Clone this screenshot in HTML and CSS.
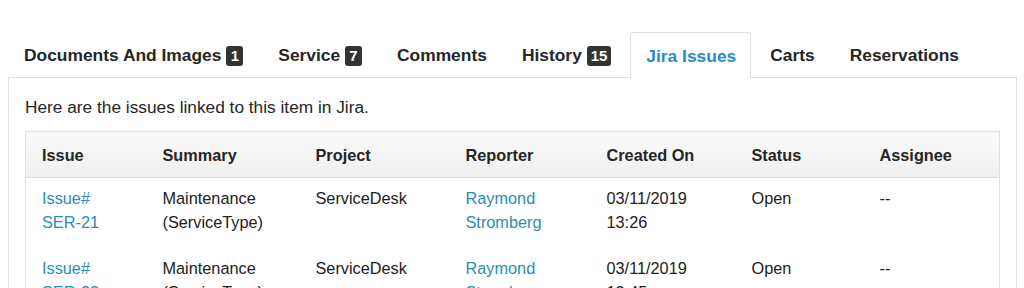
FILE: index.html
```html
<!DOCTYPE html>
<html>
<head>
<meta charset="utf-8">
<link rel="stylesheet" href="styles.css">
</head>
<body>
<ul class="tabs">
  <li class="tab">Documents And Images <span class="badge">1</span></li>
  <li class="tab">Service <span class="badge">7</span></li>
  <li class="tab">Comments</li>
  <li class="tab">History <span class="badge">15</span></li>
  <li class="tab active">Jira Issues</li>
  <li class="tab">Carts</li>
  <li class="tab">Reservations</li>
</ul>
<div class="panel">
  <p class="intro">Here are the issues linked to this item in Jira.</p>
  <table class="issues">
    <colgroup>
      <col class="c1"><col class="c2"><col class="c3"><col class="c4"><col class="c5"><col class="c6"><col class="c7">
    </colgroup>
    <thead>
      <tr><th>Issue</th><th>Summary</th><th>Project</th><th>Reporter</th><th>Created On</th><th>Status</th><th>Assignee</th></tr>
    </thead>
    <tbody>
      <tr>
        <td><a href="#">Issue#<br>SER-21</a></td>
        <td>Maintenance<br>(ServiceType)</td>
        <td>ServiceDesk</td>
        <td><a href="#">Raymond<br>Stromberg</a></td>
        <td>03/11/2019<br>13:26</td>
        <td>Open</td>
        <td>--</td>
      </tr>
      <tr>
        <td><a href="#">Issue#<br>SER-22</a></td>
        <td>Maintenance<br>(ServiceType)</td>
        <td>ServiceDesk</td>
        <td><a href="#">Raymond<br>Stromberg</a></td>
        <td>03/11/2019<br>13:45</td>
        <td>Open</td>
        <td>--</td>
      </tr>
    </tbody>
  </table>
</div>
</body>
</html>
```
FILE: styles.css
```css
* { box-sizing: border-box; }
html, body { background: #fff; }
body {
  margin: 31px 7px 0 8px;
  font-family: "Liberation Sans", Arial, sans-serif;
  color: #222;
  font-size: 16px;
}
.tabs {
  list-style: none;
  margin: 0;
  padding: 0;
  display: flex;
  align-items: flex-end;
  position: relative;
  z-index: 1;
}
.tab {
  font-weight: bold;
  font-size: 17.4px;
  color: #262626;
  height: 46px;
  padding: 2px 15px 0;
  margin-right: 3px;
  display: flex;
  align-items: center;
  border: 1px solid transparent;
  border-bottom: none;
  border-radius: 4px 4px 0 0;
  white-space: pre;
}
.tab.active {
  color: #2a8bc4;
  background: #fff;
  border-color: #dedede;
  margin-bottom: -1px;
  padding: 2px 14px 0 15px;
}
.badge {
  display: inline-block;
  background: #333;
  color: #fff;
  font-size: 15px;
  line-height: 20px;
  min-width: 17px;
  padding: 0 4px;
  text-align: center;
  border-radius: 3px;
}
.panel {
  border: 1px solid #e0e0e0;
  padding: 17px 16px 0 16px;
}
.intro {
  margin: 0 0 12px 0;
  line-height: 24px;
  font-size: 17.3px;
  color: #262626;
}
.issues {
  width: 100%;
  border-collapse: collapse;
  table-layout: fixed;
  border: 1px solid #e0e0e0;
  font-size: 16.3px;
}
.c1 { width: 121px; }
.c2 { width: 153px; }
.c3 { width: 150px; }
.c4 { width: 141px; }
.c5 { width: 145px; }
.c6 { width: 128px; }
.issues th {
  text-align: left;
  font-weight: bold;
  color: #262626;
  padding: 11px 16px 10px;
  line-height: 24px;
  background: linear-gradient(#fafafa, #efefef);
  border-bottom: 1px solid #dcdcdc;
}
.issues td {
  vertical-align: top;
  padding: 8px 16px 14px;
  line-height: 24px;
  color: #222;
}
.issues a {
  color: #2b8db5;
  text-decoration: none;
}
```
